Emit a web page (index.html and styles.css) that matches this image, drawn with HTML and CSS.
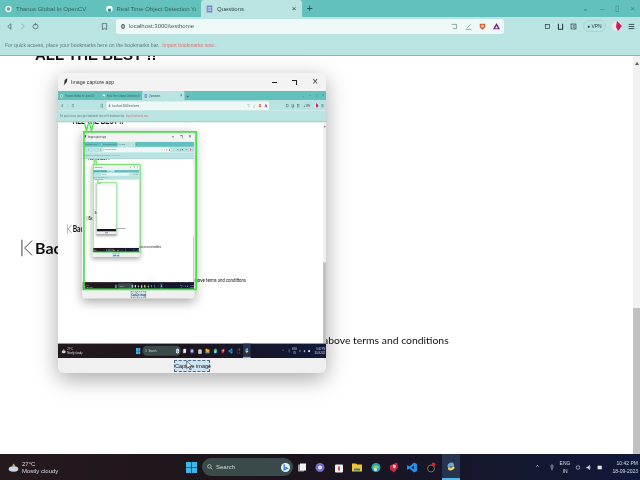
FILE: index.html
```html
<!DOCTYPE html>
<html lang="en">
<head>
    <meta charset="UTF-8">
    <meta name="viewport" content="width=device-width, initial-scale=1.0">
    <title>Questions</title>
    <link rel="stylesheet" href="styles.css">
</head>
<body>

<div class="screen" id="screen">
    <div class="tabs">
        <div class="tab">
            <svg class="tab-icon" viewBox="0 0 10 10"><circle cx="5" cy="5" r="4.5" fill="#e8f5f4"/><circle cx="5" cy="5" r="2.5" fill="#6f9f8e"/></svg>
            <span class="tab-title">Thanos Global In OpenCV</span>
        </div>
        <div class="tab">
            <svg class="tab-icon" viewBox="0 0 10 10"><circle cx="5" cy="5" r="4.5" fill="#fff"/><path d="M3 9V6.5L2.500 4l1 .5h3l1-.5L7 6.500V9z" fill="#3b7f88"/></svg>
            <span class="tab-title">Real Time Object Detection YouTube</span>
        </div>
        <div class="tab active">
            <svg class="tab-icon" viewBox="0 0 10 10"><rect x="1" width="8" height="10" fill="#6f86c9"/><path d="M2.500 3h5M2.500 5h5M2.500 7h5" stroke="#e6ebf7"/></svg>
            <span class="tab-title">Questions</span>
            <span class="tab-close">×</span>
        </div>
        <span class="tab-new">+</span>
        <div class="win-btns">
            <span>⌄</span><span>–</span><span>▯</span><span>×</span>
        </div>
    </div>

    <div class="toolbar">
        <svg class="nav-icon first" viewBox="0 0 10 10"><path d="M7 1 2.500 5 7 9z" fill="none" stroke="#3f5655"/></svg>
        <svg class="nav-icon" viewBox="0 0 10 10"><path d="M3 1l4.500 4L3 9" fill="none" stroke="#8aa5a3"/></svg>
        <svg class="nav-icon" viewBox="0 0 10 10"><circle cx="5" cy="5" r="3.500" fill="none" stroke="#3f5655"/><path d="M5 .5v3" stroke="#3f5655"/></svg>
        <svg class="nav-icon bookmark" viewBox="0 0 10 10"><path d="M2 .5h6v9L5 7.500 2 9.500z" fill="none" stroke="#3f5655"/></svg>
        <div class="urlbar">
            <svg class="url-info" viewBox="0 0 10 10"><rect x="2" y="1" width="6" height="8" rx="3" fill="#3f5655"/><rect x="4" y="3" width="2" height="4" fill="#eef8f7"/></svg>
            <span class="url-text">localhost:3000/testhome</span>
            <div class="url-icons">
                <svg class="nav-icon" viewBox="0 0 10 10"><path d="M1 2h7v6H3" fill="none" stroke="#6d8583"/></svg>
                <svg class="nav-icon" viewBox="0 0 10 10"><path d="M1 9h8M3 7l5-5" fill="none" stroke="#6d8583"/></svg>
                <svg class="nav-icon" viewBox="0 0 10 10"><path d="M1 1h8v5L5 10 1 6z" fill="#d9662e"/><path d="M3.500 3h3v3h-3z" fill="#f3e2d0"/></svg>
                <svg class="nav-icon" viewBox="0 0 10 10"><path d="M5 0l5 9H0z" fill="#7a1f80"/><path d="M5 4l2 4H3z" fill="#f2e9f2"/></svg>
            </div>
        </div>
        <svg class="nav-icon" viewBox="0 0 10 10"><rect x="2" y="2" width="6" height="6" fill="none" stroke="#24393a"/></svg>
        <svg class="nav-icon" viewBox="0 0 10 10"><path d="M2 1v8h6V1" fill="none" stroke="#24393a" stroke-width="1.500"/></svg>
        <svg class="nav-icon" viewBox="0 0 10 10"><rect x="1.500" y="1.500" width="7" height="7" fill="none" stroke="#24393a"/><path d="M4 4h3M4 6h3" stroke="#24393a"/></svg>
        <span class="vpn">● VPN</span>
        <svg class="avatar" viewBox="0 0 10 10"><circle cx="5" cy="5" r="5" fill="#f1e4e8"/><path d="M5 0l5 5-4 5-2-4z" fill="#c21d55"/></svg>
        <svg class="nav-icon" viewBox="0 0 10 10"><path d="M1 2h8M1 5h8M1 8h8" stroke="#24393a" stroke-width="1.200"/></svg>
    </div>

    <div class="hint">
        <span>For quick access, place your bookmarks here on the bookmarks bar.</span>
        <a class="hint-link">Import bookmarks now...</a>
    </div>

    <div class="page">
        <div class="content">
            <h1 class="best">ALL THE BEST !!</h1>
            <div class="back">
                <svg class="back-icon" viewBox="0 0 13 18"><path d="M1 0v18M12 1 4 9l8 8" fill="none" stroke="#333" stroke-width="1"/></svg>
                <span>Back</span>
            </div>
            <div class="terms">above terms and conditions</div>
        </div>
        <div class="scroll">
            <span class="scroll-up"></span>
            <span class="scroll-thumb"></span>
        </div>
    </div>

    <div class="taskbar">
        <div class="weather">
            <svg class="weather-icon" viewBox="0 0 16 14"><path d="M8 1l3 4H6z" fill="#e0a050"/><ellipse cx="8" cy="9" rx="7" ry="4" fill="#cbd6e6"/></svg>
            <div class="weather-text"><span>27°C</span><span>Mostly cloudy</span></div>
        </div>
        <svg class="start" viewBox="0 0 11 11"><path d="M0 0h5.200v5.200H0zM5.800 0H11v5.200H5.800zM0 5.800h5.200V11H0zM5.800 5.800H11V11H5.800z" fill="#3fb5e8"/></svg>
        <div class="search">
            <svg class="search-icon" viewBox="0 0 10 10"><circle cx="4" cy="4" r="3" fill="none" stroke="#e6eeee"/><path d="M6.500 6.500 9 9" stroke="#e6eeee"/></svg>
            <span>Search</span>
            <svg class="bing" viewBox="0 0 10 10"><circle cx="5" cy="5" r="5" fill="#e8f2fb"/><path d="M3.500 1.500v6L7 6 5 4.500" fill="none" stroke="#2a7fd0" stroke-width="1.500"/></svg>
        </div>
        <div class="apps">
            <svg viewBox="0 0 10 10"><rect x="1" y="2" width="6" height="7" fill="#9a9a9a"/><rect x="3" y="1" width="6" height="7" fill="#f0f0f0"/></svg>
            <svg viewBox="0 0 10 10"><circle cx="5" cy="5" r="4.500" fill="#6f6cd0"/><circle cx="5" cy="5" r="2" fill="#e6e6fa"/></svg>
            <svg viewBox="0 0 10 10"><rect x="1" y="2" width="8" height="8" rx="1" fill="#eee"/><path d="M4 4h1v4H4z" fill="#e05050"/><path d="M5 4h1v4H5z" fill="#40a060"/></svg>
            <svg viewBox="0 0 10 10"><path d="M0 1h4l1 1h5v7H0z" fill="#f4c430"/><rect x="2" y="6" width="6" height="2" fill="#2a7fb8"/></svg>
            <svg viewBox="0 0 10 10"><circle cx="5" cy="5" r="4.500" fill="#2aa5b8"/><path d="M2 6.500a3 3 0 0 1 6-1z" fill="#8fd64f"/><circle cx="4.500" cy="7" r="1.500" fill="#cfe8ee"/></svg>
            <svg viewBox="0 0 10 10"><path d="M1 3l7-3 1 5-4 5-4-3z" fill="#c92a4a"/><path d="M4 2l3 1-1 3-2-1z" fill="#f0d8c0"/></svg>
            <svg viewBox="0 0 10 10"><path d="M7 0l3 1.500v7L7 10 2.500 6 .8 7.300 0 6.800V3.200l.8-.5L2.500 4zM7 3 4.500 5 7 7z" fill="#2a8fe0"/></svg>
            <svg viewBox="0 0 10 10"><circle cx="5" cy="6" r="3.500" fill="#111" stroke="#aaa" stroke-width=".6"/><circle cx="7.500" cy="2" r="2" fill="#e02020"/></svg>
            <span class="app-active"><svg viewBox="0 0 10 10"><path d="M5 1c3 0 3 1 3 4H4v1H2C1 5 1 2 5 1z" fill="#6ea8d8"/><path d="M5 9c-3 0-3-1-3-3h4V5h2c1 1 1 3-3 4z" fill="#f0d060"/></svg></span>
        </div>
        <div class="tray">
            <span class="tray-sm">^</span>
            <svg class="tray-icon" viewBox="0 0 10 10"><rect x="3.500" y=".5" width="3" height="6" rx="1.500" fill="none" stroke="#cfe0f0"/><path d="M5 7v3" stroke="#cfe0f0"/></svg>
            <div class="tray-lang"><span>ENG</span><span>IN</span></div>
            <svg class="tray-icon" viewBox="0 0 10 10"><circle cx="5" cy="5" r="3" fill="none" stroke="#e0e6ee"/></svg>
            <svg class="tray-icon" viewBox="0 0 10 10"><path d="M1 4h2l3-3v8L3 6H1zM7.500 3v4" fill="#e0e6ee" stroke="#e0e6ee" stroke-width=".5"/></svg>
            <svg class="tray-icon" viewBox="0 0 10 10"><rect x="1" y="2" width="7" height="6" fill="#e0e6ee"/></svg>
            <div class="clock"><span>10:42 PM</span><span>18-09-2023</span></div>
        </div>
    </div>

    <!-- drag selection, only shows up inside the captured copies -->
    <div class="select">
        <svg class="select-mark" viewBox="0 0 24 16"><path d="M1 1l5 14 5-14M13 1l5 14 5-14" fill="none" stroke="#45e245" stroke-width="3"/></svg>
    </div>

    <div class="capture">
        <div class="capture-title">
            <svg class="feather" viewBox="0 0 8 12"><path d="M7 0C3 1 2 4 2 8l-1 4 2-3c3-1 4-5 4-9z" fill="#333"/></svg>
            <span>Image capture app</span>
            <div class="capture-btns">
                <span class="btn-min"></span><span class="btn-max"></span><span class="btn-close">×</span>
            </div>
        </div>
        <div class="capture-view"><div class="shot"></div></div>
        <div class="capture-foot">
            <button class="capture-btn">Capture image</button>
            <svg class="pointer" viewBox="0 0 8 12"><path d="M1 0v10l2.500-2.500L5.500 12 7 11 5 7h3z" fill="#fff" stroke="#222" stroke-width=".8"/></svg>
        </div>
    </div>
</div>

<script src="script.js"></script>
</body>
</html>
```

FILE: styles.css
```css
* {
    box-sizing: border-box;
}
body {
    margin: 0;
    background-color: #fff;
    overflow: hidden;
}
.screen {
    position: relative;
    width: 640px;
    height: 480px;
    display: flex;
    flex-direction: column;
    overflow: hidden;
    background-color: #fff;
    font-family: "Liberation Sans", Arial, sans-serif;
    color: #222;
}
body > .screen {
    filter: blur(0.5px);
}

/* tabs */
.tabs {
    height: 17px;
    flex: none;
    display: flex;
    align-items: stretch;
    background-color: #62c1bd;
    font-size: 6px;
    color: #3a5f5d;
}
.tab {
    width: 100.5px;
    padding: 0 5px;
    display: flex;
    align-items: center;
    gap: 4px;
    white-space: nowrap;
    overflow: hidden;
}
.tab.active {
    background-color: #b9e4e2;
    border-radius: 3px 3px 0 0;
    color: #2f4a49;
}
.tab-icon {
    width: 7px;
    height: 8px;
    flex: none;
}
.tab-title {
    flex: 1;
    overflow: hidden;
}
.tab-close {
    font-size: 8px;
}
.tab-new {
    margin-left: 5px;
    font-size: 11px;
    line-height: 17px;
    color: #2b5553;
}
.win-btns {
    margin-left: auto;
    padding-right: 5px;
    display: flex;
    gap: 11px;
    align-items: center;
    font-size: 8px;
    color: #3d7c79;
}

/* toolbar */
.toolbar {
    height: 18px;
    flex: none;
    padding-right: 5px;
    display: flex;
    align-items: center;
    gap: 6px;
    background-color: #b9e4e2;
}
.nav-icon {
    width: 7px;
    height: 7px;
    flex: none;
}
.nav-icon.first {
    margin-left: 6px;
}
.nav-icon.bookmark {
    margin-left: 56px;
}
.urlbar {
    width: 388px;
    height: 15px;
    margin: 0 34px 0 2px;
    padding: 0 4px;
    display: flex;
    align-items: center;
    gap: 3px;
    background-color: #eef8f7;
    border-radius: 3px;
    font-size: 6px;
    color: #4a5f5e;
}
.url-info {
    width: 6px;
    height: 7px;
}
.url-icons {
    margin-left: auto;
    display: flex;
    gap: 7px;
}
.vpn {
    padding: 2px 3px;
    border: 1px solid #a8d4d1;
    border-radius: 6px;
    font-size: 5px;
    color: #2c4645;
}
.avatar {
    width: 10px;
    height: 10px;
    flex: none;
}

/* bookmarks hint */
.hint {
    height: 21px;
    flex: none;
    padding-left: 5px;
    display: flex;
    align-items: center;
    gap: 3px;
    background-color: #b9e4e2;
    border-bottom: 1px solid #8fb5b3;
    font-size: 5.100px;
    color: #5d7a78;
    white-space: nowrap;
}
.hint-link {
    color: #e07070;
}

/* page */
.page {
    flex: 1;
    min-height: 0;
    display: flex;
    overflow: hidden;
}
.content {
    flex: 1;
    overflow: hidden;
}
.best {
    margin: -13px 0 0 35px;
    font-size: 15px;
    line-height: 24px;
    color: #111;
}
.back {
    margin: 171px 0 0 21px;
    display: flex;
    align-items: center;
    gap: 2px;
    font-family: Lato, sans-serif;
    font-size: 16px;
    font-weight: bold;
    color: #111;
}
.back-icon {
    width: 12px;
    height: 18px;
}
.terms {
    margin: 75px 0 0 323px;
    font-family: Lato, sans-serif;
    font-size: 10.400px;
    line-height: 16px;
    color: #111;
    white-space: nowrap;
}
.scroll {
    width: 7px;
    flex: none;
    display: flex;
    flex-direction: column;
    background-color: #f1f1f1;
}
.scroll-up {
    width: 0;
    height: 0;
    margin: 4px auto 0;
    border: 2px solid transparent;
    border-bottom: 3px solid #555;
}
.scroll-thumb {
    height: 146px;
    margin-top: auto;
    background-color: #c1c1c1;
}

/* taskbar */
.taskbar {
    height: 26px;
    flex: none;
    display: flex;
    align-items: center;
    background: linear-gradient(90deg, #241a1e, #1c141c 45%, #10193a);
    color: #d8dee6;
    font-size: 6px;
}
.weather {
    width: 186px;
    padding-left: 8px;
    display: flex;
    align-items: center;
    gap: 3px;
}
.weather-icon {
    width: 11px;
    height: 11px;
}
.weather-text {
    display: flex;
    flex-direction: column;
    gap: 1px;
}
.start {
    width: 11px;
    height: 11px;
    flex: none;
}
.search {
    width: 91px;
    height: 18px;
    margin-left: 5px;
    padding: 0 3px 0 5px;
    display: flex;
    align-items: center;
    gap: 3px;
    background-color: #3a4a4a;
    border-radius: 9px;
    color: #d4dcdc;
}
.search-icon {
    width: 6px;
    height: 6px;
}
.bing {
    width: 9px;
    height: 11px;
    margin-left: auto;
}
.apps {
    margin-left: 4px;
    display: flex;
    align-items: center;
    gap: 8.400px;
}
.apps svg {
    width: 10px;
    height: 11px;
    display: block;
}
.app-active {
    margin-left: -2px;
    padding: 7px 4px 6px;
    background-color: #26344f;
    border-bottom: 2px solid #55b8e8;
}
.tray {
    margin-left: auto;
    padding-right: 2px;
    display: flex;
    align-items: center;
    gap: 5px;
    font-size: 5px;
}
.tray-sm {
    margin-right: 5px;
}
.tray-icon {
    width: 6px;
    height: 7px;
}
.tray-lang,
.clock {
    display: flex;
    flex-direction: column;
    align-items: center;
    gap: 2px;
}
.clock {
    margin-left: 4px;
    align-items: flex-end;
}

/* selection box, in the captured copies only */
.select {
    display: none;
    position: absolute;
    left: 60px;
    top: 72px;
    width: 272px;
    height: 286px;
    z-index: 3;
    border: solid #45e245;
    border-width: 3px 4px;
    pointer-events: none;
}
.shot .select {
    display: block;
}
.select-mark {
    position: absolute;
    left: -2px;
    top: -19px;
    width: 24px;
    height: 16px;
}

/* the capture app, sits over the page like a desktop window */
.capture {
    position: absolute;
    left: 58px;
    top: 73px;
    width: 268px;
    height: 300px;
    z-index: 2;
    display: flex;
    flex-direction: column;
    background-color: #f0f0f0;
    border-radius: 6px;
    box-shadow: 0 6px 22px rgba(0, 0, 0, 0.35);
    overflow: hidden;
}
.capture-title {
    height: 18px;
    flex: none;
    padding: 0 8px 0 5px;
    display: flex;
    align-items: center;
    gap: 3px;
    background-color: #f3f3f3;
    font-size: 5.200px;
    color: #333;
}
.feather {
    width: 5px;
    height: 8px;
}
.capture-btns {
    margin-left: auto;
    display: flex;
    align-items: center;
    gap: 15px;
}
.btn-min {
    width: 5px;
    height: 1px;
    background-color: #222;
}
.btn-max {
    width: 5px;
    height: 5px;
    border: solid #222;
    border-width: 1px 1px 0 0;
}
.btn-close {
    font-size: 10px;
    line-height: 10px;
}
.capture-view {
    height: 267px;
    flex: none;
    overflow: hidden;
}
.shot {
    width: 640px;
    height: 480px;
    background-color: #fff;
    transform: scale(0.41875, 0.5563);
    transform-origin: 0 0;
}
/* deepest copy, too small to hold anything but its taskbar */
.shot:empty {
    background: linear-gradient(#fff 94%, #1c141c 94%);
}
.capture-foot {
    position: relative;
    flex: 1;
    display: flex;
    align-items: center;
    justify-content: center;
}
.capture-btn {
    width: 36px;
    height: 12px;
    padding: 0;
    background-color: #cfe3f2;
    border: 1px dashed #4b6c8a;
    font-family: inherit;
    font-size: 5.500px;
    color: #111;
    white-space: nowrap;
}
.pointer {
    position: absolute;
    left: 128px;
    top: 3px;
    width: 6px;
    height: 9px;
}
```

FILE: script.js
```js
// the page photographs itself, so the window shows a copy of the whole screen, a few levels deep
const screen0 = document.getElementById('screen');
const blank = screen0.cloneNode(true);
blank.removeAttribute('id');

let host = screen0.querySelector('.shot');
for (let level = 0; level < 3; level++) {
    const copy = blank.cloneNode(true);
    host.appendChild(copy);
    host = copy.querySelector('.shot');
}
```
